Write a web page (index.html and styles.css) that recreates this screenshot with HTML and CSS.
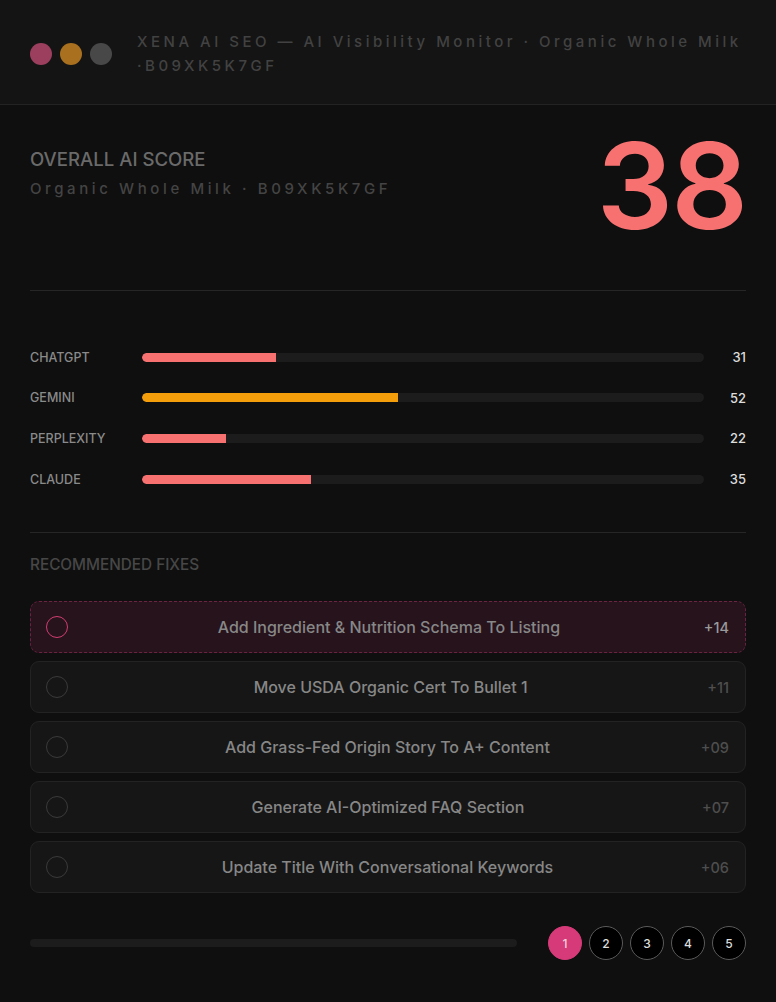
FILE: index.html
```html
<!DOCTYPE html>
<html>
<head>
<meta charset="utf-8">
<link rel="stylesheet" href="styles.css">
</head>
<body>
<header class="topbar">
  <div class="dots">
    <span class="dot dot-pink"></span>
    <span class="dot dot-orange"></span>
    <span class="dot dot-gray"></span>
  </div>
  <div class="app-title">XENA AI SEO — AI Visibility Monitor · Organic Whole Milk ·B09XK5K7GF</div>
</header>
<main class="content">
  <section class="score">
    <div class="score-text">
      <div class="score-label">OVERALL AI SCORE</div>
      <div class="score-sub">Organic Whole Milk · B09XK5K7GF</div>
    </div>
    <div class="score-num">38</div>
  </section>
  <section class="engines">
    <div class="engine">
      <span class="engine-name">CHATGPT</span>
      <div class="track"><div class="fill fill-red" style="width:23.9%"></div></div>
      <span class="engine-val">31</span>
    </div>
    <div class="engine">
      <span class="engine-name">GEMINI</span>
      <div class="track"><div class="fill fill-amber" style="width:45.6%"></div></div>
      <span class="engine-val">52</span>
    </div>
    <div class="engine">
      <span class="engine-name">PERPLEXITY</span>
      <div class="track"><div class="fill fill-red" style="width:15%"></div></div>
      <span class="engine-val">22</span>
    </div>
    <div class="engine">
      <span class="engine-name">CLAUDE</span>
      <div class="track"><div class="fill fill-red" style="width:30%"></div></div>
      <span class="engine-val">35</span>
    </div>
  </section>
  <section class="fixes">
    <div class="fixes-title">RECOMMENDED FIXES</div>
    <ul class="fix-list">
      <li class="fix fix-active"><span class="check"></span><span class="fix-text">Add Ingredient &amp; Nutrition Schema To Listing</span><span class="fix-gain">+14</span></li>
      <li class="fix"><span class="check"></span><span class="fix-text">Move USDA Organic Cert To Bullet 1</span><span class="fix-gain">+11</span></li>
      <li class="fix"><span class="check"></span><span class="fix-text">Add Grass-Fed Origin Story To A+ Content</span><span class="fix-gain">+09</span></li>
      <li class="fix"><span class="check"></span><span class="fix-text">Generate AI-Optimized FAQ Section</span><span class="fix-gain">+07</span></li>
      <li class="fix"><span class="check"></span><span class="fix-text">Update Title With Conversational Keywords</span><span class="fix-gain">+06</span></li>
    </ul>
  </section>
  <footer class="pager">
    <div class="pager-track"></div>
    <div class="pages">
      <span class="page page-on">1</span>
      <span class="page">2</span>
      <span class="page">3</span>
      <span class="page">4</span>
      <span class="page">5</span>
    </div>
  </footer>
</main>
</body>
</html>
```
FILE: styles.css
```css
* { box-sizing: border-box; }
html, body {
  margin: 0;
  padding: 0;
  background: #0f0f0f;
  font-family: Inter, "Noto Sans", sans-serif;
  color: #888;
}
body { width: 776px; height: 1002px; overflow: hidden; }

.topbar {
  height: 105px;
  background: #141414;
  border-bottom: 1px solid #232323;
  display: flex;
  align-items: center;
  padding: 4px 20px 0 30px;
  gap: 25px;
}
.dots { display: flex; gap: 8px; flex: none; margin-top: 0; }
.dot { width: 22px; height: 22px; border-radius: 50%; display: block; }
.dot-pink { background: #9c3f5e; }
.dot-orange { background: #a8701f; }
.dot-gray { background: #484848; }
.app-title {
  font-size: 15px;
  line-height: 24px;
  letter-spacing: 3.5px;
  color: #424242;
  font-weight: 500;
}

.content { padding: 0 30px; }

.score {
  display: flex;
  justify-content: space-between;
  align-items: flex-start;
  padding: 21px 0 44px;
  border-bottom: 1px solid #262626;
}
.score-text { padding-top: 22px; }
.score-label {
  font-size: 18.6px;
  line-height: 22px;
  font-weight: 500;
  color: #6a6a6a;
}
.score-sub {
  margin-top: 9px;
  font-size: 15px;
  line-height: 20px;
  letter-spacing: 3.6px;
  color: #444;
  font-weight: 500;
}
.score-num {
  font-size: 120px;
  line-height: 1;
  font-weight: 600;
  color: #f87171;
  letter-spacing: -2px;
}

.engines {
  padding: 46px 0 33px;
  border-bottom: 1px solid #262626;
}
.engine {
  height: 40.6px;
  display: flex;
  align-items: center;
}
.engine-name {
  width: 112px;
  flex: none;
  font-size: 12.5px;
  font-weight: 500;
  color: #8a8a8a;
}
.track {
  flex: 1;
  height: 9px;
  background: #1c1c1c;
  border-radius: 5px;
  overflow: hidden;
}
.fill { height: 100%; border-radius: 5px 0 0 5px; }
.fill-red { background: #f87171; }
.fill-amber { background: #f59e0b; }
.engine-val {
  width: 42px;
  flex: none;
  text-align: right;
  font-size: 13px;
  font-weight: 500;
  color: #ddd;
}

.fixes { padding-top: 22px; }
.fixes-title {
  font-size: 15.3px;
  line-height: 20px;
  font-weight: 500;
  color: #474747;
}
.fix-list {
  list-style: none;
  margin: 26px 0 0;
  padding: 0;
  display: flex;
  flex-direction: column;
  gap: 8px;
}
.fix {
  height: 52px;
  display: flex;
  align-items: center;
  padding: 0 16px 0 15px;
  background: #161616;
  border: 1px solid #232323;
  border-radius: 9px;
}
.fix-active {
  background: #26131c;
  border: 1px dashed #6b2342;
}
.check {
  width: 22px;
  height: 22px;
  border-radius: 50%;
  border: 1px solid #3a3a3a;
  flex: none;
}
.fix-active .check { border-color: #d23d72; }
.fix-text {
  flex: 1;
  text-align: center;
  font-size: 16px;
  font-weight: 500;
  color: #878787;
  padding-left: 6px;
}
.fix-gain {
  font-size: 14.5px;
  font-weight: 500;
  color: #4e4e4e;
}
.fix-active .fix-gain { color: #9a9a9a; }

.pager {
  margin-top: 33px;
  display: flex;
  align-items: center;
  gap: 31px;
}
.pager-track {
  flex: 1;
  height: 8px;
  border-radius: 4px;
  background: #1c1c1c;
}
.pages { display: flex; gap: 7px; }
.page {
  width: 34px;
  height: 34px;
  border-radius: 50%;
  border: 1px solid #5a5a5a;
  background: #000;
  color: #ddd;
  font-size: 12px;
  font-weight: 500;
  display: flex;
  align-items: center;
  justify-content: center;
}
.page-on { background: #d63a78; border-color: #d63a78; color: #f0d0dc; }
```
